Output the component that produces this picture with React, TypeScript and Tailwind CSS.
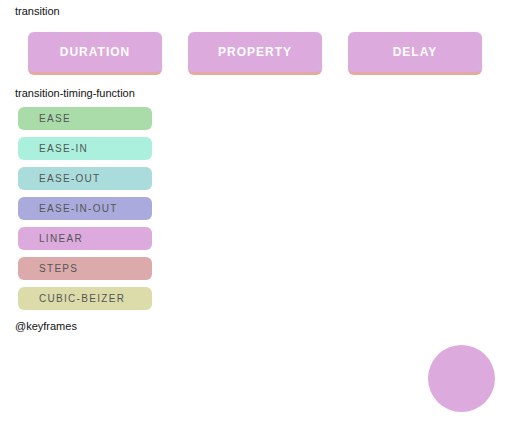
import React from "react";

const timing = [
  { label: "EASE", cls: "bg-[#aadcaa]" },
  { label: "EASE-IN", cls: "bg-[#aaf0dc]" },
  { label: "EASE-OUT", cls: "bg-[#aadcdc]" },
  { label: "EASE-IN-OUT", cls: "bg-[#aaaadc]" },
  { label: "LINEAR", cls: "bg-[#dcaadc]" },
  { label: "STEPS", cls: "bg-[#dcaaaa]" },
  { label: "CUBIC-BEIZER", cls: "bg-[#dcdcaa]" },
];

export default function App() {
  return (
    <div className="w-[520px] h-[427px] bg-white overflow-hidden font-['Liberation_Sans',Arial,sans-serif] text-[11px] leading-[13px] text-[#111]">
      <div className="pt-[5px] pl-[15px]">transition</div>
      <div className="flex gap-[26px] pl-[28px] mt-[14px]">
        {["DURATION", "PROPERTY", "DELAY"].map((t) => (
          <div
            key={t}
            className="w-[134px] h-[43px] rounded-[6px] bg-[#dcaadc] border-b-[3px] border-[#e2aaa0] flex items-center justify-center text-white font-bold text-[12px] tracking-[1px] shadow-[0_0_1px_rgba(0,0,0,0.08)]"
          >
            {t}
          </div>
        ))}
      </div>
      <div className="pl-[15px] mt-[12px]">transition-timing-function</div>
      <div className="flex flex-col gap-[7px] pl-[18px] mt-[7px]">
        {timing.map((t) => (
          <div
            key={t.label}
            className={`w-[134px] h-[23px] rounded-[6px] ${t.cls} flex items-center pl-[21px] text-[10px] tracking-[1.3px] text-[#555]`}
          >
            {t.label}
          </div>
        ))}
      </div>
      <div className="pl-[15px] mt-[10px]">@keyframes</div>
      <div className="ml-[428px] mt-[12px] w-[67px] h-[67px] rounded-full bg-[#dcaadc]" />
    </div>
  );
}
